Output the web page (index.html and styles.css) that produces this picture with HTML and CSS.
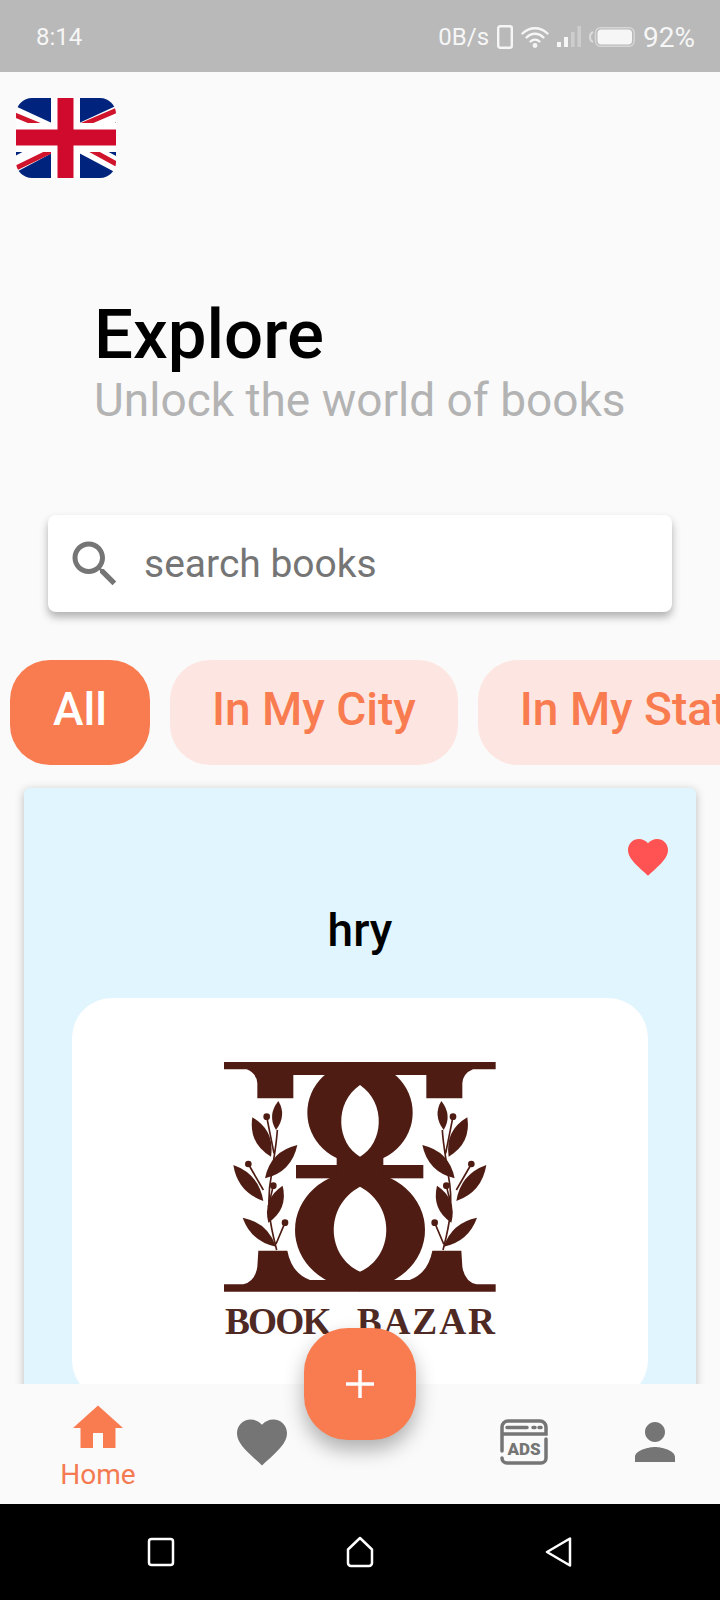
FILE: index.html
```html
<!DOCTYPE html>
<html lang="en">
<head>
    <meta charset="UTF-8">
    <meta name="viewport" content="width=device-width, initial-scale=1.0">
    <title>Book Bazar - Explore</title>
    <link rel="stylesheet" href="styles.css">
</head>
<body>

    <div class="screen">

        <div class="status-bar">
            <span>8:14</span>
            <div class="status-right">
                <span>0B/s</span>
                <svg class="status-phone" width="16" height="24" viewBox="0 0 16 24"><rect x="1.2" y="1.2" width="13.6" height="21.6" rx="2"/></svg>
                <svg class="status-wifi" width="28" height="22" viewBox="0 0 28 22">
                    <path d="M1.5 7.5C8.5 .5 19.5 .5 26.5 7.5"/>
                    <path d="M5.5 11.5C10.5 6.5 17.5 6.5 22.5 11.5"/>
                    <path d="M9.5 15.5C12 13 16 13 18.5 15.5"/>
                    <circle class="fill-white" cx="14" cy="19.5" r="2.4"/>
                </svg>
                <svg class="status-signal" width="24" height="22" viewBox="0 0 24 22">
                    <rect class="fill-white" x="0" y="16" width="4" height="5"/>
                    <rect class="fill-white" x="7" y="11" width="4" height="10"/>
                    <rect class="fill-dim" x="14" y="6" width="3.5" height="15"/>
                    <rect class="fill-dim" x="20.5" y="0" width="3.5" height="21"/>
                </svg>
                <svg class="status-battery" width="46" height="20" viewBox="0 0 46 20">
                    <path class="nub" d="M4 5C1.500 6 1 8 1 10s.5 4 3 5"/>
                    <rect class="shell" x="6.500" y=".8" width="38.700" height="18.400" rx="5"/>
                    <rect class="fill-white" x="8.500" y="2.500" width="34.500" height="15" rx="4"/>
                </svg>
                <span class="status-percent">92%</span>
            </div>
        </div>

        <div class="content">
            <svg class="flag" width="100" height="80" viewBox="0 0 100 80">
                <g class="flag-art">
                    <rect class="flag-blue" x="-6" y="-6" width="112" height="92"/>
                    <path class="flag-diag-white" d="M49.500 39.500L106 13.500M49.500 39.500L-6 14M49.500 39.500L106 69.500M49.500 39.500L-6 69"/>
                    <path class="flag-diag-red" d="M-6 15L35 32M106 10L64 28M106 69L64 46M-6 73L35 53"/>
                    <path class="flag-cross-white" d="M49.500 -6V86M-6 39.500H106"/>
                    <path class="flag-cross-red" d="M49.500 -6V86M-6 39.500H106"/>
                </g>
            </svg>

            <div class="hero">
                <h1>Explore</h1>
                <p>Unlock the world of books</p>
            </div>

            <div class="search">
                <svg width="60" height="60" viewBox="0 0 24 24"><path d="M15.500 14h-.79l-.28-.27C15.410 12.590 16 11.110 16 9.500 16 5.910 13.090 3 9.500 3S3 5.910 3 9.500 5.910 16 9.500 16c1.610 0 3.090-.59 4.230-1.570l.27.28v.79l5 4.990L20.490 19l-4.990-5zm-6 0C7.010 14 5 11.990 5 9.500S7.010 5 9.500 5 14 7.010 14 9.500 11.990 14 9.500 14z"/></svg>
                <span>search books</span>
            </div>

            <div class="chips">
                <div class="chip active">All</div>
                <div class="chip">In My City</div>
                <div class="chip">In My State</div>
            </div>

            <div class="card">
                <div class="card-top">
                    <svg width="48" height="48" viewBox="0 0 24 24"><path d="M12 21.350l-1.450-1.320C5.400 15.360 2 12.280 2 8.500 2 5.420 4.420 3 7.500 3c1.740 0 3.410.81 4.500 2.090C13.090 3.810 14.760 3 16.500 3 19.580 3 22 5.420 22 8.500c0 3.780-3.400 6.860-8.550 11.540L12 21.350z"/></svg>
                </div>
                <h3>hry</h3>
                <div class="card-image">
                    <svg class="logo" width="320" height="310" viewBox="0 0 960 930">
                        <g id="logo-half">
                            <path d="M72 66H480V105H280V175H172V130Q170 100 140 88H72Z"/>
                            <path d="M72 755V733H130Q165 725 172 680L175 632H262Q275 700 330 720H480V755Z"/>
                            <path d="M157 232Q225 272 213 350Q145 310 157 232Z"/>
                            <path d="M235 183Q261 226 228 270Q201 226 235 183Z"/>
                            <path d="M292 315Q275 396 195 415Q211 334 292 315Z"/>
                            <path d="M100 375Q177 402 190 483Q113 456 100 375Z"/>
                            <path d="M248 437Q265 507 205 548Q187 477 248 437Z"/>
                            <path d="M128 533Q203 548 228 620Q153 604 128 533Z"/>
                            <path class="logo-stem" d="M230 630C215 570 195 500 215 400C222 350 230 310 232 270M200 230L222 340M145 372L190 450M220 437L205 500M255 548L228 612"/>
                            <circle cx="200" cy="230" r="10"/>
                            <circle cx="145" cy="372" r="10"/>
                            <circle cx="220" cy="437" r="10"/>
                            <circle cx="255" cy="548" r="10"/>
                        </g>
                        <use href="#logo-half" transform="matrix(-1 0 0 1 959 0)"/>
                        <ellipse cx="480" cy="218" rx="158" ry="152"/>
                        <ellipse cx="480" cy="570" rx="195" ry="176"/>
                        <rect x="288" y="375" width="382" height="40"/>
                        <rect x="410" y="345" width="140" height="70"/>
                        <path class="logo-hole" d="M480 135C400 190 410 310 480 350C550 310 560 190 480 135Z"/>
                        <path class="logo-hole" d="M480 440C370 500 380 650 480 695C580 650 590 500 480 440Z"/>
                        <text class="logo-text" x="75" y="882" textLength="320">BOOK</text>
                        <text class="logo-text" x="470" y="882" textLength="415">BAZAR</text>
                    </svg>
                </div>
            </div>
        </div>

        <div class="bottom-nav">
            <div class="nav-item current">
                <svg width="60" height="60" viewBox="0 0 24 24"><path d="M10 20v-6h4v6h5v-8h3L12 3 2 12h3v8z"/></svg>
                <span>Home</span>
            </div>
            <div class="nav-item">
                <svg width="60" height="60" viewBox="0 0 24 24"><path d="M12 21.350l-1.450-1.320C5.400 15.360 2 12.280 2 8.500 2 5.420 4.420 3 7.500 3c1.740 0 3.410.81 4.500 2.090C13.090 3.810 14.760 3 16.500 3 19.580 3 22 5.420 22 8.500c0 3.780-3.400 6.860-8.550 11.540L12 21.350z"/></svg>
            </div>
            <div></div>
            <div class="nav-item">
                <svg class="ads-icon" width="48" height="46" viewBox="0 0 48 46">
                    <path d="M2 32V8a6 6 0 0 1 6-6h32a6 6 0 0 1 6 6v7H2"/>
                    <path d="M46 20v19a5 5 0 0 1-5 5H7a5 5 0 0 1-5-5"/>
                    <path d="M7 8.500H27M33 8.500h2M39 8.500h2"/>
                    <text x="24" y="35.500">ADS</text>
                </svg>
            </div>
            <div class="nav-item">
                <svg width="60" height="60" viewBox="0 0 24 24"><path d="M12 12c2.210 0 4-1.790 4-4s-1.790-4-4-4-4 1.790-4 4 1.790 4 4 4zm0 2c-2.670 0-8 1.340-8 4v2h16v-2c0-2.660-5.330-4-8-4z"/></svg>
            </div>
        </div>

        <div class="fab">
            <svg width="30" height="30" viewBox="0 0 30 30"><path d="M15 1V29M1 15H29"/></svg>
        </div>

        <div class="system-bar">
            <svg width="30" height="32" viewBox="0 0 30 32"><rect x="3" y="3" width="24" height="26" rx="2.500"/></svg>
            <svg width="30" height="32" viewBox="0 0 30 32"><path d="M15 2L27 13.500V27a3 3 0 0 1-3 3H6a3 3 0 0 1-3-3V13.500Z"/></svg>
            <svg width="30" height="32" viewBox="0 0 30 32"><path d="M26 2.500V29.500L3 16Z"/></svg>
        </div>

    </div>

</body>
</html>
```

FILE: styles.css
```css
* {
    box-sizing: border-box;
}

body {
    margin: 0;
    font-family: Roboto, "Noto Sans", sans-serif;
    background-color: #fafafa;
}

.screen {
    position: relative;
    width: 720px;
    height: 1600px;
    display: flex;
    flex-direction: column;
    overflow: hidden;
}

/* status bar */
.status-bar {
    flex: 0 0 72px;
    display: flex;
    align-items: center;
    justify-content: space-between;
    padding: 2px 25px 0 36px;
    background-color: #b9b9b9;
    color: #f6f6f6;
    font-size: 24px;
}

.status-right {
    display: flex;
    align-items: center;
    gap: 8px;
}

.status-phone rect,
.status-wifi path {
    fill: none;
    stroke: #f6f6f6;
    stroke-width: 2.4;
}

.status-wifi path {
    stroke-linecap: round;
}

.fill-white {
    fill: #f6f6f6;
}

.fill-dim {
    fill: #cdcdcd;
}

.status-battery .nub {
    fill: none;
    stroke: #dcdcdc;
    stroke-width: 2;
}

.status-battery .shell {
    fill: none;
    stroke: #d6d6d6;
    stroke-width: 1.500;
}

.status-percent {
    font-size: 28px;
}

/* main */
.content {
    flex: 1;
    min-height: 0;
    overflow: hidden;
}

.flag {
    display: block;
    margin: 26px 0 0 16px;
    border-radius: 16px;
}

.flag-art {
    filter: blur(.6px);
}

.flag-blue {
    fill: #00247d;
}

.flag-diag-white {
    stroke: #fff;
    stroke-width: 15;
}

.flag-diag-red {
    stroke: #cf142b;
    stroke-width: 5;
}

.flag-cross-white {
    stroke: #fff;
    stroke-width: 29;
}

.flag-cross-red {
    stroke: #cf0a2c;
    stroke-width: 16;
}

.hero {
    margin-top: 123px;
    padding-left: 94px;
}

.hero h1 {
    margin: 0;
    font-size: 69px;
    line-height: 68px;
    font-weight: 500;
    color: #000;
}

.hero p {
    margin: 8px 0 0;
    font-size: 46px;
    line-height: 46px;
    color: #b3b3b3;
}

.search {
    height: 97px;
    margin: 92px 48px 0;
    padding-left: 17px;
    display: flex;
    align-items: center;
    gap: 19px;
    background: white;
    border-radius: 8px;
    box-shadow: 0 5px 9px rgba(0, 0, 0, 0.3);
    color: #757575;
    font-size: 39px;
}

.search svg {
    fill: #757575;
}

.chips {
    display: flex;
    gap: 20px;
    margin-top: 48px;
    padding-left: 10px;
    white-space: nowrap;
}

.chip {
    flex-shrink: 0;
    height: 105px;
    padding: 0 42px 8px;
    display: flex;
    align-items: center;
    border-radius: 40px;
    background-color: #fde6e1;
    color: #f97b50;
    font-size: 46px;
    font-weight: 500;
}

.chip.active {
    padding: 0 43px 8px;
    background-color: #f97b50;
    color: white;
}

.card {
    margin: 23px 24px 0;
    padding: 45px 24px 0;
    height: 700px;
    background-color: #e1f5fe;
    border-radius: 6px;
    box-shadow: 0 2px 10px rgba(0, 0, 0, 0.25);
}

.card-top {
    display: flex;
    justify-content: flex-end;
}

.card-top svg {
    display: block;
    fill: #ff5252;
}

.card h3 {
    margin: 23px 0 42px;
    font-size: 46px;
    line-height: 52px;
    font-weight: 500;
    text-align: center;
    color: #000;
}

.card-image {
    height: 402px;
    margin: 0 24px;
    padding-top: 42px;
    display: flex;
    justify-content: center;
    align-items: flex-start;
    background: white;
    border-radius: 40px;
}

.logo {
    fill: #4f1c13;
}

.logo-stem {
    fill: none;
    stroke: #4f1c13;
    stroke-width: 5;
}

.logo-hole {
    fill: white;
}

.logo-text {
    font-family: "Liberation Serif", serif;
    font-size: 112px;
    font-weight: bold;
    fill: #4f2a24;
}

/* bottom nav */
.bottom-nav {
    position: relative;
    flex: 0 0 120px;
    display: grid;
    grid-template-columns: 196px 132px 130px 132px 130px;
    padding-bottom: 4px;
    background-color: #fafafa;
}

.nav-item {
    display: flex;
    flex-direction: column;
    align-items: center;
    justify-content: center;
}

.nav-item svg {
    display: block;
    fill: #757575;
}

.nav-item.current {
    justify-content: flex-start;
    padding-top: 14px;
    color: #f47a52;
    font-size: 28px;
    line-height: 28px;
}

.nav-item.current svg {
    fill: #f97b50;
}

.nav-item.current span {
    margin-top: 3px;
}

.ads-icon {
    overflow: visible;
}

.nav-item .ads-icon path {
    fill: none;
    stroke: #757575;
    stroke-width: 3.500;
    stroke-linecap: round;
}

.ads-icon text {
    font-family: Roboto, sans-serif;
    font-size: 17px;
    font-weight: 900;
    text-anchor: middle;
}

.fab {
    position: absolute;
    left: 304px;
    bottom: 160px;
    width: 112px;
    height: 112px;
    display: flex;
    align-items: center;
    justify-content: center;
    border-radius: 44px;
    background-color: #f97b50;
    box-shadow: 0 10px 20px rgba(0, 0, 0, 0.3);
}

.fab svg {
    stroke: white;
    stroke-width: 3.500;
}

/* android buttons */
.system-bar {
    flex: 0 0 96px;
    display: flex;
    align-items: center;
    justify-content: center;
    gap: 169px;
    background-color: #000;
}

.system-bar svg {
    fill: none;
    stroke: white;
    stroke-width: 2.500;
    stroke-linejoin: round;
}
```
